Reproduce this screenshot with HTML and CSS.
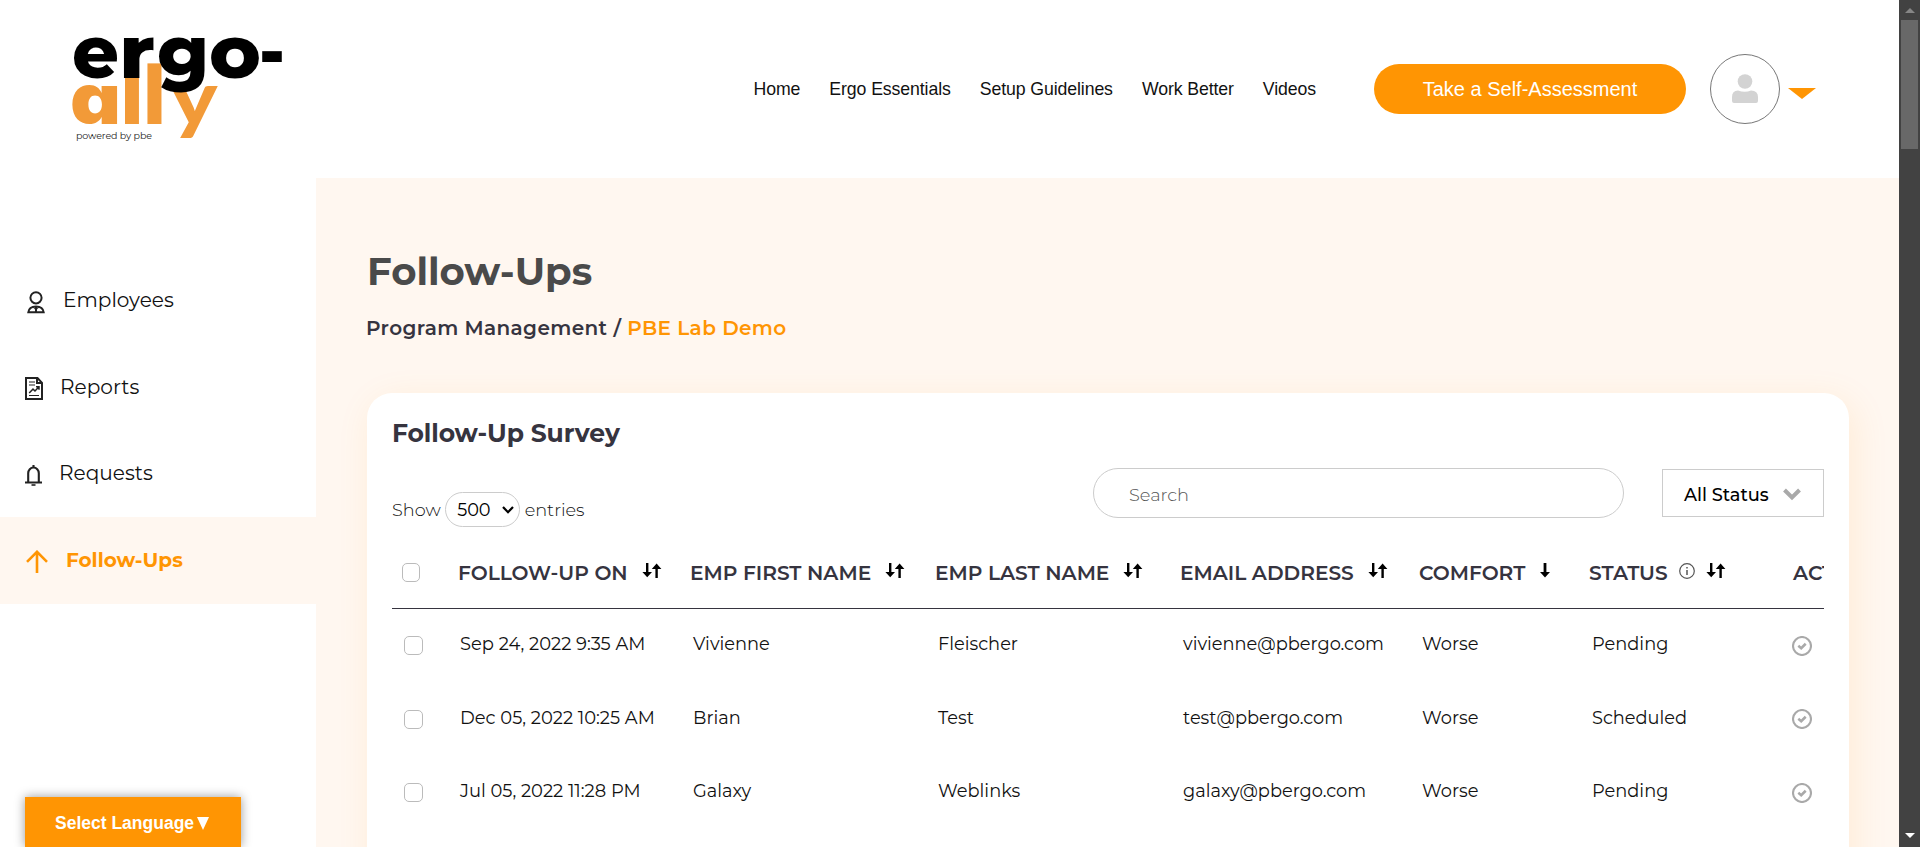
FILE: index.html
```html
<!DOCTYPE html>
<html lang="en">
<head>
<meta charset="utf-8">
<title>Follow-Ups</title>
<link rel="stylesheet" href="styles.css">
</head>
<body>
<svg class="defs" width="0" height="0">
  <symbol id="down" viewBox="0 0 10 15"><path d="M5 0V11" stroke="#000" stroke-width="2.8"/><path d="M0 9L5 14.5L10 9Z"/></symbol>
  <symbol id="sort" viewBox="0 0 20 15"><path d="M5.2 0V11M14.6 15V4" stroke="#000" stroke-width="2.4"/><path d="M.4 9L5.2 14.2L10 9ZM9.8 6L14.6 .6L19.4 6Z"/></symbol>
  <symbol id="check" viewBox="0 0 20 20"><circle cx="10" cy="10" r="9" fill="none" stroke="#a9a9a9" stroke-width="2.1"/><path d="M6.3 9.8L9.2 12.2L13.7 7.8" fill="none" stroke="#a9a9a9" stroke-width="2.6"/></symbol>
</svg>
<div class="window">
<div class="page">
  <header class="header">
    <svg class="logo" width="230" height="130" viewBox="60 25 230 130">
      <g class="logo-ally">
        <text class="logo-a" x="70" y="124" font-size="70" textLength="51" lengthAdjust="spacingAndGlyphs">a</text>
        <text x="120.5" y="124" font-size="82" textLength="23" lengthAdjust="spacingAndGlyphs">l</text>
        <text x="143" y="124" font-size="82" textLength="23" lengthAdjust="spacingAndGlyphs">l</text>
        <text class="logo-y" x="170.5" y="124.5" font-size="76" textLength="47" lengthAdjust="spacingAndGlyphs">y</text>
      </g>
      <g class="logo-ergo">
        <text x="72" y="77.5" font-size="75" textLength="47" lengthAdjust="spacingAndGlyphs">e</text>
        <text x="119" y="77.5" font-size="75" textLength="36" lengthAdjust="spacingAndGlyphs">r</text>
        <text x="157" y="77.5" font-size="75" textLength="52" lengthAdjust="spacingAndGlyphs">g</text>
        <text x="209" y="77.5" font-size="75" textLength="52" lengthAdjust="spacingAndGlyphs">o</text>
        <text x="259" y="77.5" font-size="75" textLength="26" lengthAdjust="spacingAndGlyphs">-</text>
      </g>
      <text class="logo-tag" x="76" y="139" textLength="76">powered by pbe</text>
    </svg>
    <nav class="nav">
      <a>Home</a><a>Ergo Essentials</a><a>Setup Guidelines</a><a>Work Better</a><a>Videos</a>
    </nav>
    <a class="cta">Take a Self-Assessment</a>
    <div class="avatar">
      <svg width="28" height="30" viewBox="0 0 28 30"><circle cx="14" cy="7.5" r="7.3" fill="#d3d3d3"/><path d="M1 27V23Q1 17 7 16.6Q14 19 20 16.6Q27 17 27 23V27Q27 29 25 29H3Q1 29 1 27Z" fill="#d3d3d3"/></svg>
    </div>
    <span class="caret"></span>
  </header>
  <div class="body">
    <aside class="sidebar">
      <a class="item employees"><svg width="18" height="23" viewBox="0 0 18 23" fill="none" stroke="#222" stroke-width="2"><circle cx="9" cy="6.8" r="5.6"/><path d="M1.3 21.3Q2 15.4 9 15.4Q16 15.4 16.7 21.3ZM9 15.4V21" /><path d="M6.3 15.8Q7 18 9 18.5Q11 18 11.7 15.8" stroke-width="1"/></svg><span>Employees</span></a>
      <a class="item reports"><svg width="18" height="23" viewBox="0 0 18 23" fill="none" stroke="#222" stroke-width="2"><path d="M1 1H12.5L17 5.8V22H1Z"/><path d="M12 1V6H17"/><path d="M4 5H10M4 8H10M4 18.5H14" stroke-width="1.2"/><path d="M4.2 16L8 12L10 14L14 9.8M11 9.8H14V12.8" stroke-width="1.5"/></svg><span>Reports</span></a>
      <a class="item requests"><svg width="17" height="21" viewBox="0 0 17 21" fill="none" stroke="#222" stroke-width="2.1"><path d="M3.2 17.5V8.2A5.3 5.7 0 0 1 13.8 8.2V17.5"/><path d="M0 17.5H17M8.5 0V3"/><path d="M6.5 20H10.5" stroke-width="1.6"/></svg><span>Requests</span></a>
      <a class="item follow active"><svg width="22" height="23" viewBox="0 0 22 23" fill="none" stroke="#ff9503" stroke-width="2.6"><path d="M11 23V2M1 11.8L11 1.8L21 11.8"/></svg><span>Follow-Ups</span></a>
    </aside>
    <main class="main">
      <h1>Follow-Ups</h1>
      <p class="crumb"><span class="program">Program Management</span><span class="slash">/</span><b>PBE Lab Demo</b></p>
      <section class="card">
        <h2>Follow-Up Survey</h2>
        <div class="tools">
          <div class="show"><span>Show</span><span class="length">500<svg width="12" height="8" viewBox="0 0 12 8" fill="none" stroke="#000" stroke-width="2.2"><path d="M1 1L6 6.2L11 1"/></svg></span><span>entries</span></div>
          <div class="search">Search</div>
          <div class="status">All Status<svg width="18" height="13" viewBox="0 0 18 13" fill="none" stroke="#a9a9a9" stroke-width="4"><path d="M1.5 2L9 9.5L16.5 2"/></svg></div>
        </div>
        <div class="table">
          <div class="row head">
            <i class="box"></i>
            <span class="th">FOLLOW-UP ON<svg class="sort"><use href="#sort"/></svg></span>
            <span class="th">EMP FIRST NAME<svg class="sort"><use href="#sort"/></svg></span>
            <span class="th">EMP LAST NAME<svg class="sort"><use href="#sort"/></svg></span>
            <span class="th">EMAIL ADDRESS<svg class="sort"><use href="#sort"/></svg></span>
            <span class="th">COMFORT<svg class="down"><use href="#down"/></svg></span>
            <span class="th">STATUS<svg class="info" viewBox="0 0 16 16" fill="none" stroke="#555"><circle cx="8" cy="8" r="7.3" stroke-width="1.2"/><path d="M8 7V12M8 4V5.6" stroke-width="1.5"/></svg><svg class="sort tight"><use href="#sort"/></svg></span>
            <span class="th">ACTION</span>
          </div>
          <div class="row"><i class="box"></i><span class="date">Sep 24, 2022 9:35 AM</span><span>Vivienne</span><span>Fleischer</span><span>vivienne@pbergo.com</span><span>Worse</span><span>Pending</span><svg class="check"><use href="#check"/></svg></div>
          <div class="row"><i class="box"></i><span class="date">Dec 05, 2022 10:25 AM</span><span>Brian</span><span>Test</span><span>test@pbergo.com</span><span>Worse</span><span>Scheduled</span><svg class="check"><use href="#check"/></svg></div>
          <div class="row"><i class="box"></i><span class="date">Jul 05, 2022 11:28 PM</span><span>Galaxy</span><span>Weblinks</span><span>galaxy@pbergo.com</span><span>Worse</span><span>Pending</span><svg class="check"><use href="#check"/></svg></div>
        </div>
      </section>
    </main>
  </div>
</div>
<div class="scrollbar"><i class="up"></i><i class="thumb"></i><i class="dn"></i></div>
</div>
<div class="language">Select Language<i></i></div>
</body>
</html>
```
FILE: styles.css
```css
* { box-sizing: border-box; }
body { margin: 0; height: 847px; overflow: hidden; background: #fff; color: #111; font-family: Montserrat, Inter, sans-serif; }
h1, h2, p { margin: 0; }
svg { flex: none; }
.defs { position: absolute; }
.window { display: flex; height: 847px; }
.page { flex: 1; min-width: 0; display: flex; flex-direction: column; }

.header { height: 178px; flex: none; display: flex; align-items: center; padding: 0 83px 0 60px; font-family: "Liberation Sans", Arial, sans-serif; }
.logo { align-self: flex-start; margin-top: 25px; overflow: visible; font-family: Montserrat, Inter, sans-serif; }
.logo-ally, .logo-ergo { font-weight: 800; }
.logo-a { font-family: Inter, sans-serif; font-weight: 900; font-feature-settings: "cv11"; }
.logo-y { font-family: Lato, sans-serif; font-weight: 900; }
.logo-ally { fill: #f29a38; }
.logo-tag { font-size: 9.5px; fill: #222; }
.nav { display: flex; gap: 29px; margin-left: auto; margin-right: 58px; font-size: 17.7px; letter-spacing: -0.1px; color: #111; }
.cta { width: 312px; height: 50px; border-radius: 25px; background: #ff9503; color: #fff; font-size: 20px; line-height: 50px; text-align: center; }
.avatar { width: 70px; height: 70px; margin-left: 24px; border: 1px solid #777; border-radius: 50%; display: flex; align-items: center; justify-content: center; }
.caret { margin: 9px 0 0 8px; border: 14px solid transparent; border-top: 11px solid #ff9503; border-bottom: 0; }

.body { flex: 1; min-height: 0; display: flex; }
.sidebar { width: 316px; flex: none; padding-top: 78px; }
.item { height: 87px; display: flex; align-items: center; font-size: 20.1px; }
.employees { padding-left: 27px; gap: 18px; }
.employees svg { margin-top: 5px; }
.reports { padding-left: 25px; gap: 17px; }
.reports svg { margin-top: 4px; }
.requests { padding-left: 25px; gap: 17px; }
.requests svg { margin-top: 3px; }
.requests span { margin-top: -2px; }
.follow { padding-left: 26px; gap: 18px; font-size: 20px; }
.follow svg { margin-top: 2px; }
.follow span { margin-top: -2px; }
.active { background: #fff7f0; color: #ff9503; font-weight: 700; }

.main { flex: 1; min-width: 0; padding: 66px 50px 0 51px; background: #fff7f0; overflow: hidden; }
h1 { font-size: 38.6px; line-height: 55px; color: #4a4a4a; }
.crumb { margin: 13px 0 0 -1px; display: flex; font-size: 20px; line-height: 32px; font-weight: 600; letter-spacing: 0.38px; color: #36343f; }
.slash { margin: 0 6px; }
.crumb b { font-weight: 600; color: #ff9503; }
.card { margin-top: 49px; height: 600px; padding: 24px 25px 0; background: #fff; border-radius: 25px; box-shadow: 5px 8px 36px rgba(255, 149, 5, .11); }
h2 { font-size: 25px; line-height: 32px; font-weight: 700; letter-spacing: -0.1px; color: #36343f; }
.tools { display: flex; align-items: flex-start; margin-top: 19px; height: 68px; }
.show { display: flex; align-items: center; gap: 4.5px; margin-top: 24px; font-size: 17.7px; font-weight: 300; }
.length { width: 75px; height: 35px; padding: 0 5px 0 11px; border: 1px solid #ccc; border-radius: 18px; display: flex; align-items: center; justify-content: space-between; color: #000; font-weight: 400; }
.search { margin-left: auto; width: 531px; height: 50px; padding-left: 35px; border: 1px solid #ccc; border-radius: 25px; line-height: 51px; font-size: 17.8px; font-weight: 300; color: #555; }
.status { width: 162px; height: 48px; margin: 1px 0 0 38px; padding: 2px 22px 0 21px; border: 1px solid #ccc; display: flex; align-items: center; justify-content: space-between; font-size: 17.8px; font-weight: 500; color: #000; }
.table { overflow: hidden; }
.row { display: grid; grid-template-columns: 68px 233px 245px 245px 239px 170px 200px 200px; width: 1600px; height: 73.5px; align-items: center; font-size: 17.8px; }
.row > span { margin-top: -4px; }
.row > .date { font-size: 17.9px; }
.head { height: 73px; grid-template-columns: 66px 232px 245px 245px 239px 170px 204px 200px; border-bottom: 1px solid #36343f; font-size: 20.15px; font-weight: 600; color: #36343f; }
.row > .th { display: flex; align-items: center; margin-top: 1px; }
.sort { width: 20px; height: 15px; margin: -5px 0 0 14px; }
.sort.tight { margin-left: 11px; }
.down { width: 10px; height: 15px; margin: -5px 0 0 15px; }
.info { width: 16px; height: 16px; margin: -3px 0 0 11px; }
.box { width: 19px; height: 19px; margin-left: 12px; border: 1px solid #bbb; border-radius: 5px; }
.head .box { margin-left: 10px; width: 18px; }
.check { width: 20px; height: 20px; }

.scrollbar { width: 21px; background: #424242; display: flex; flex-direction: column; align-items: center; padding: 8px 0 9px; }
.up { border: 5px solid transparent; border-bottom: 5px solid #868686; border-top: 0; }
.thumb { width: 17px; height: 129px; margin-top: 7px; background: #686868; }
.dn { margin-top: auto; border: 5px solid transparent; border-top: 5px solid #fff; border-bottom: 0; }
.language { position: absolute; left: 25px; top: 797px; width: 216px; height: 50px; padding: 2px 0 0 30px; display: flex; align-items: center; gap: 3px; background: #ff9503; box-shadow: 0 0 10px rgba(0, 0, 0, .4); color: #fff; font: bold 17.5px "Liberation Sans", Arial, sans-serif; }
.language i { border: 6.5px solid transparent; border-top: 13px solid #fff; border-bottom: 0; }
```
